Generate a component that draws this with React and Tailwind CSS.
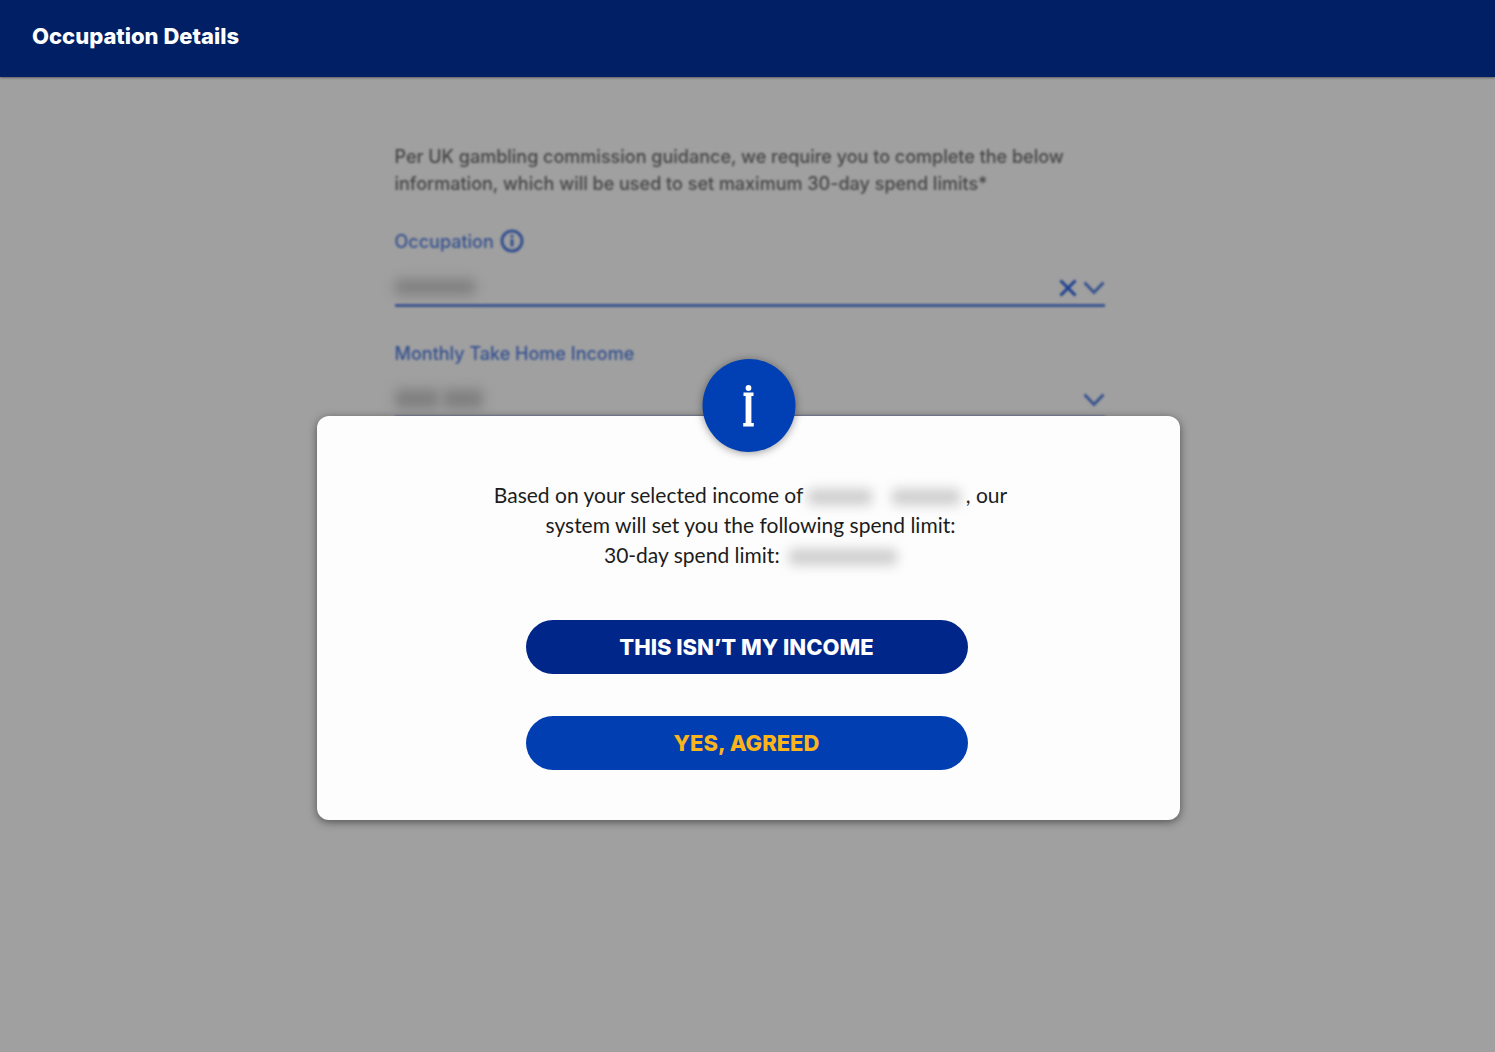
import { useState } from "react";

const InfoIcon = () => (
  <svg viewBox="0 0 24 24" fill="none" stroke="currentColor" strokeWidth="3" className="h-6 w-6" aria-hidden="true">
    <circle cx="12" cy="12" r="10" />
    <path d="M12 10v7.5" />
    <circle cx="12" cy="7.2" r="0.8" strokeWidth="1.6" />
  </svg>
);

const ChevronIcon = () => (
  <svg viewBox="0 0 22 22" fill="none" stroke="currentColor" strokeWidth="2.8" className="h-[22px] w-[22px]" aria-hidden="true">
    <path d="M1.5 5.5 11 15.5l9.5-10" />
  </svg>
);

const ClearIcon = () => (
  <svg viewBox="0 0 18 18" fill="none" stroke="currentColor" strokeWidth="3" className="h-[18px] w-[18px]" aria-hidden="true">
    <path d="M1.5 1.5l15 15M16.5 1.5l-15 15" />
  </svg>
);

const Smudge = ({ className }) => (
  <span aria-hidden="true" className={`inline-block rounded-sm ${className}`} />
);

const SelectField = ({ id, label, hint, clearable, children }) => (
  <div className="flex flex-col">
    <div className="flex h-7 items-center gap-[6px]">
      <label htmlFor={id} className="text-[18px] font-medium">
        {label}
      </label>
      {hint}
    </div>
    <div className="relative mt-4 flex h-9 items-start border-b-3 border-[#3b5490]">
      <select id={id} className="h-8 min-w-0 flex-1 appearance-none bg-transparent outline-none">
        <option aria-label="Hidden value" />
      </select>
      <div className="pointer-events-none absolute top-0 left-0 flex h-8 items-center gap-1">{children}</div>
      <div className="flex h-[34px] items-center gap-[6px]">
        {clearable && (
          <button type="button" aria-label="Clear" className="text-[#1d4090]">
            <ClearIcon />
          </button>
        )}
        <ChevronIcon />
      </div>
    </div>
  </div>
);

const OccupationForm = () => (
  <form className="mx-auto mt-[66px] flex w-full max-w-[710px] flex-col text-[#34508f] blur-[1px]">
    <p className="text-[18px] leading-[27px] font-medium text-[#454545]">
      Per UK gambling commission guidance, we require you to complete the below
      information, which will be used to set maximum 30-day spend limits*
    </p>
    <div className="mt-[30px] flex flex-col gap-8">
      <SelectField
        id="occupation"
        label="Occupation"
        clearable
        hint={
          <button type="button" aria-label="About occupation">
            <InfoIcon />
          </button>
        }
      >
        <Smudge className="h-4 w-20 bg-[#808080] blur-[6px]" />
      </SelectField>
      <SelectField id="income" label="Monthly Take Home Income">
        <Smudge className="h-5 w-11 bg-[#808080] blur-[6px]" />
        <Smudge className="h-5 w-10 bg-[#808080] blur-[6px]" />
      </SelectField>
    </div>
  </form>
);

const SpendLimitDialog = ({ onClose }) => (
  <div className="absolute inset-0 flex items-start justify-center pt-[416px] pr-6 pl-[26px]">
    <div
      role="dialog"
      aria-modal="true"
      aria-labelledby="spend-limit-text"
      className="relative flex w-full max-w-[863px] flex-col items-center rounded-xl bg-[#fdfdfd] px-6 pt-16 pb-[50px] shadow-[0_2px_8px_rgba(0,0,0,0.5)]"
    >
      <div className="absolute -top-[57px] left-1/2 flex h-[93px] w-[93px] -translate-x-1/2 items-center justify-center rounded-full bg-[#0040b4] shadow-[0_1px_8px_rgba(0,0,0,0.4)]">
        <svg viewBox="0 0 12 42" fill="#fff" className="h-[42px] w-3" aria-hidden="true">
          <circle cx="6" cy="3" r="2.9" />
          <path d="M1 7.5h10v3.6H8.9v26.8h2.4v3.6H.7v-3.6h2.4V11.1H1z" />
        </svg>
      </div>

      <p id="spend-limit-text" className="pl-1 text-center text-[21px] leading-[30px] text-[#1c1c1c]">
        Based on your selected income of{" "}
        <Smudge className="h-4 w-16 bg-[#cdcdcd] align-[-2px] blur-[6px]" />
        <Smudge className="ml-5 h-4 w-17 bg-[#cdcdcd] align-[-2px] blur-[6px]" /> , our
        <br />
        system will set you the following spend limit:
        <br />
        30-day spend limit:{" "}
        <Smudge className="ml-1 h-4 w-[108px] bg-[#cdcdcd] align-[-2px] blur-[6px]" />
      </p>

      <div className="mt-[50px] mr-1 flex w-full max-w-[442px] flex-col gap-[42px]">
        <button
          type="button"
          onClick={onClose}
          className="h-[54px] cursor-pointer rounded-full bg-[#002689] font-['Inter',sans-serif] text-[22px] font-extrabold text-white"
        >
          THIS ISN’T MY INCOME
        </button>
        <button
          type="button"
          onClick={onClose}
          className="h-[54px] cursor-pointer rounded-full bg-[#003eb1] font-['Inter',sans-serif] text-[22px] font-extrabold text-[#fbb41a]"
        >
          YES, AGREED
        </button>
      </div>
    </div>
  </div>
);

const App = () => {
  const [showDialog, setShowDialog] = useState(true);

  return (
    <div className="relative min-h-screen bg-[#a0a0a0] font-['Lato','Open_Sans',sans-serif] [font-variant-ligatures:none]">
      <header className="flex h-[77px] items-center bg-[#001f65] px-8 pb-1 font-['Inter',sans-serif] shadow-[0_1px_2px_rgba(0,0,0,0.4)]">
        <h1 className="text-[22px] font-extrabold text-white">Occupation Details</h1>
      </header>
      <main className="pr-6 pl-7 font-['Inter',sans-serif]">
        <OccupationForm />
      </main>
      {showDialog && <SpendLimitDialog onClose={() => setShowDialog(false)} />}
    </div>
  );
};

export default App;
